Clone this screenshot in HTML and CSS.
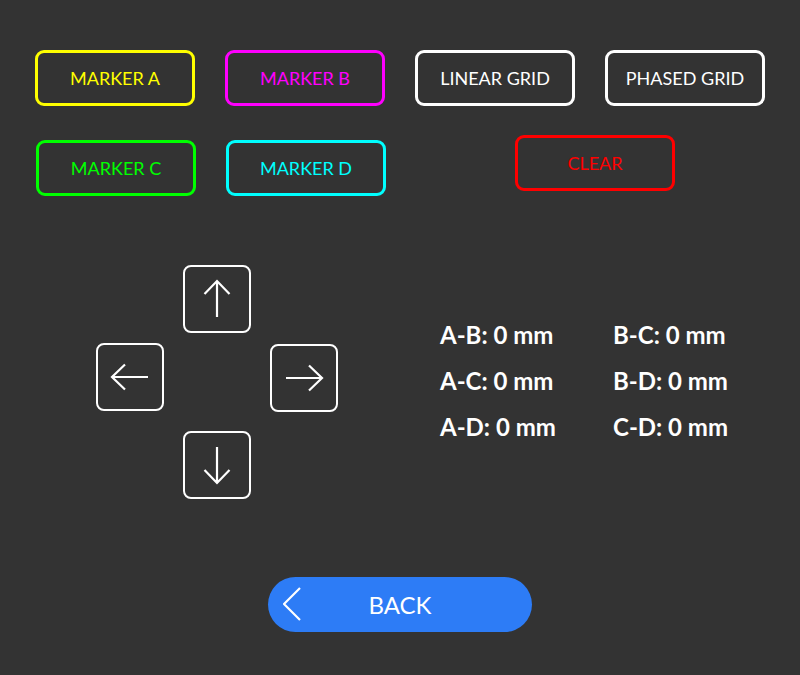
FILE: index.html
```html
<html>
<head>
<link rel="stylesheet" href="styles.css">
</head>
<body>
<div class="page">
	<div class="row row-top">
		<button class="btn marker-a">MARKER A</button>
		<button class="btn marker-b">MARKER B</button>
		<button class="btn grid">LINEAR GRID</button>
		<button class="btn grid">PHASED GRID</button>
	</div>
	<div class="row row-second">
		<button class="btn marker-c">MARKER C</button>
		<button class="btn marker-d">MARKER D</button>
		<button class="btn clear">CLEAR</button>
	</div>

	<div class="control">
		<div class="dpad">
			<button class="key key-up">
				<svg viewBox="0 0 40 40" width="40" height="40"><path d="M20 2 V38 M7.5 15 L20 2 L32.5 15"/></svg>
			</button>
			<button class="key key-left">
				<svg viewBox="0 0 40 40" width="40" height="40"><path d="M2 20 H38 M15 7.5 L2 20 L15 32.5"/></svg>
			</button>
			<button class="key key-right">
				<svg viewBox="0 0 40 40" width="40" height="40"><path d="M2 20 H38 M25 7.5 L38 20 L25 32.5"/></svg>
			</button>
			<button class="key key-down">
				<svg viewBox="0 0 40 40" width="40" height="40"><path d="M20 2 V38 M7.5 25 L20 38 L32.5 25"/></svg>
			</button>
		</div>
		<div class="stats">
			<div>A-B: 0 mm</div>
			<div>B-C: 0 mm</div>
			<div>A-C: 0 mm</div>
			<div>B-D: 0 mm</div>
			<div>A-D: 0 mm</div>
			<div>C-D: 0 mm</div>
		</div>
	</div>

	<div class="footer">
		<button class="back">
			<svg class="chevron" viewBox="0 0 18 34" width="18" height="34"><path d="M17 1 L1 17 L17 33"/></svg>
			BACK
		</button>
	</div>
</div>
</body>
</html>
```

FILE: styles.css
```css
html, body {
	margin: 0;
	padding: 0;
	background-color: #333333;
	font-family: Lato, "Open Sans", sans-serif;
}

.page {
	width: 800px;
	height: 675px;
	box-sizing: border-box;
	padding-top: 50px;
}

.row {
	display: flex;
	align-items: flex-start;
}

.row-top {
	padding-left: 35px;
	gap: 30px;
}

.row-second {
	padding-left: 36px;
	margin-top: 29px;
}

.btn {
	width: 160px;
	height: 56px;
	box-sizing: border-box;
	background: transparent;
	border: 3px solid #ffffff;
	border-radius: 9px;
	color: #ffffff;
	font-family: Lato, sans-serif;
	font-size: 18px;
	padding: 0;
}

.marker-a { border-color: #ffff00; color: #ffff00; }
.marker-b { border-color: #ff00ff; color: #ff00ff; }
.marker-c { border-color: #00ff00; color: #00ff00; margin-top: 5px; }
.marker-d { border-color: #00ffff; color: #00ffff; margin-top: 5px; margin-left: 30px; }
.clear { border-color: #ff0000; color: #ff0000; margin-left: 129px; }

.control {
	display: flex;
	align-items: flex-start;
	margin-top: 69px;
	padding-left: 96px;
}

.dpad {
	display: grid;
	grid-template-columns: 67px 67px 67px;
	grid-template-rows: 68px 78px 68px;
	column-gap: 20px;
	row-gap: 10px;
}

.key {
	width: 68px;
	height: 68px;
	box-sizing: border-box;
	background: transparent;
	border: 2px solid #ffffff;
	border-radius: 8px;
	padding: 0;
	display: flex;
	align-items: center;
	justify-content: center;
}

.key svg path, .chevron path {
	fill: none;
	stroke: #ffffff;
	stroke-width: 2.2;
}

.key-up { grid-column: 2; grid-row: 1; }
.key-left { grid-column: 1; grid-row: 2; }
.key-right { grid-column: 3; grid-row: 2; margin-top: 1px; }
.key-down { grid-column: 2; grid-row: 3; }

.stats {
	display: grid;
	grid-template-columns: 173px 140px;
	margin-left: 103px;
	margin-top: 47px;
	color: #ffffff;
	font-weight: bold;
	font-size: 24px;
	line-height: 46px;
}

.footer {
	display: flex;
	justify-content: center;
	margin-top: 78px;
}

.back {
	position: relative;
	width: 264px;
	height: 55px;
	border: none;
	border-radius: 28px;
	background-color: #2d7cf6;
	color: #ffffff;
	font-family: Lato, sans-serif;
	font-size: 24px;
	padding: 0;
}

.chevron {
	position: absolute;
	left: 15px;
	top: 10px;
}
```
